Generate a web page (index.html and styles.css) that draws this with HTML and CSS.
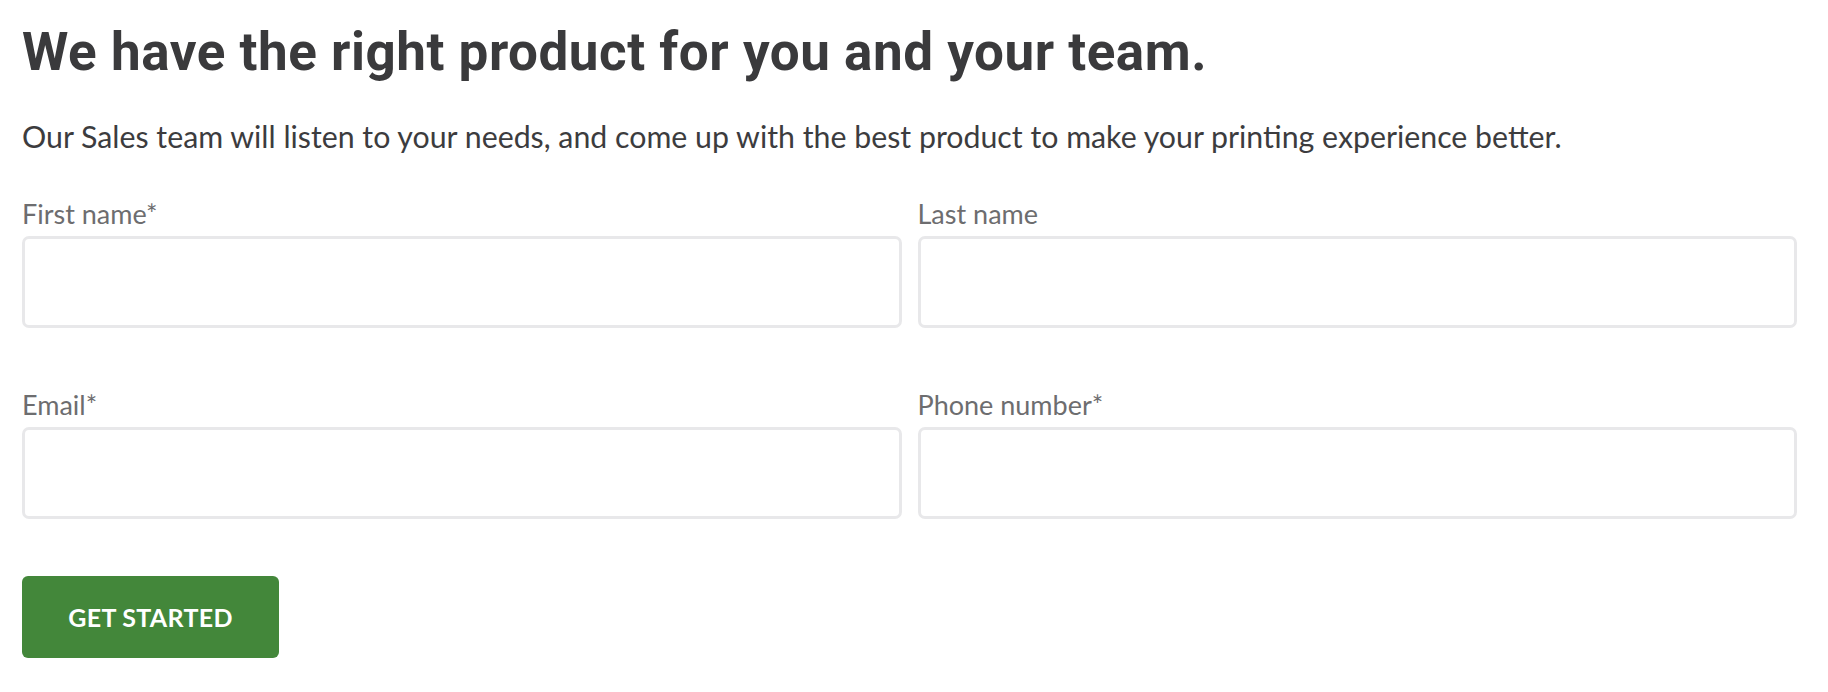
FILE: index.html
```html
<!DOCTYPE html>
<html lang="en">
<head>
<meta charset="utf-8">
<title>Contact Sales</title>
<link rel="stylesheet" href="styles.css">
</head>
<body>
<main class="page">
  <h1 class="title">We have the right product for you and your team.</h1>
  <p class="lead">Our Sales team will listen to your needs, and come up with the best product to make your printing experience better.</p>
  <form class="form">
    <div class="grid">
      <label class="field">
        <span class="label">First name*</span>
        <input class="input" type="text">
      </label>
      <label class="field">
        <span class="label">Last name</span>
        <input class="input" type="text">
      </label>
      <label class="field">
        <span class="label">Email*</span>
        <input class="input" type="email">
      </label>
      <label class="field">
        <span class="label">Phone number*</span>
        <input class="input" type="tel">
      </label>
    </div>
    <button class="btn" type="button">GET STARTED</button>
  </form>
</main>
</body>
</html>
```

FILE: styles.css
```css
* { box-sizing: border-box; }
html, body { margin: 0; padding: 0; background: #ffffff; }
.page {
  width: 1775px;
  margin-left: 22px;
  padding-top: 22px;
  font-family: Lato, "Liberation Sans", sans-serif;
}
.title {
  margin: 0;
  font-family: Roboto, "Liberation Sans", sans-serif;
  font-weight: 700;
  font-size: 53px;
  line-height: 60px;
  color: #3a3a3c;
  letter-spacing: 0.52px;
}
.lead {
  margin: 36px 0 0;
  font-size: 30.3px;
  line-height: 36px;
  color: #3c3c3e;
}
.form { margin-top: 45px; }
.grid {
  display: grid;
  grid-template-columns: 1fr 1fr;
  column-gap: 16px;
  row-gap: 62px;
}
.field {
  display: flex;
  flex-direction: column;
}
.label {
  font-size: 27px;
  line-height: 30px;
  color: #6d6d6f;
  margin-bottom: 7px;
}
.input {
  height: 92px;
  border: 3px solid #e8e8ea;
  border-radius: 7px;
  background: #fff;
  outline: none;
  font: inherit;
}
.btn {
  margin-top: 57px;
  width: 257px;
  height: 82px;
  border: 0;
  border-radius: 6px;
  background: #43873a;
  color: #ffffff;
  font-family: Lato, "Liberation Sans", sans-serif;
  font-weight: 700;
  font-size: 25px;
  letter-spacing: 0.3px;
  padding: 0;
}
```
